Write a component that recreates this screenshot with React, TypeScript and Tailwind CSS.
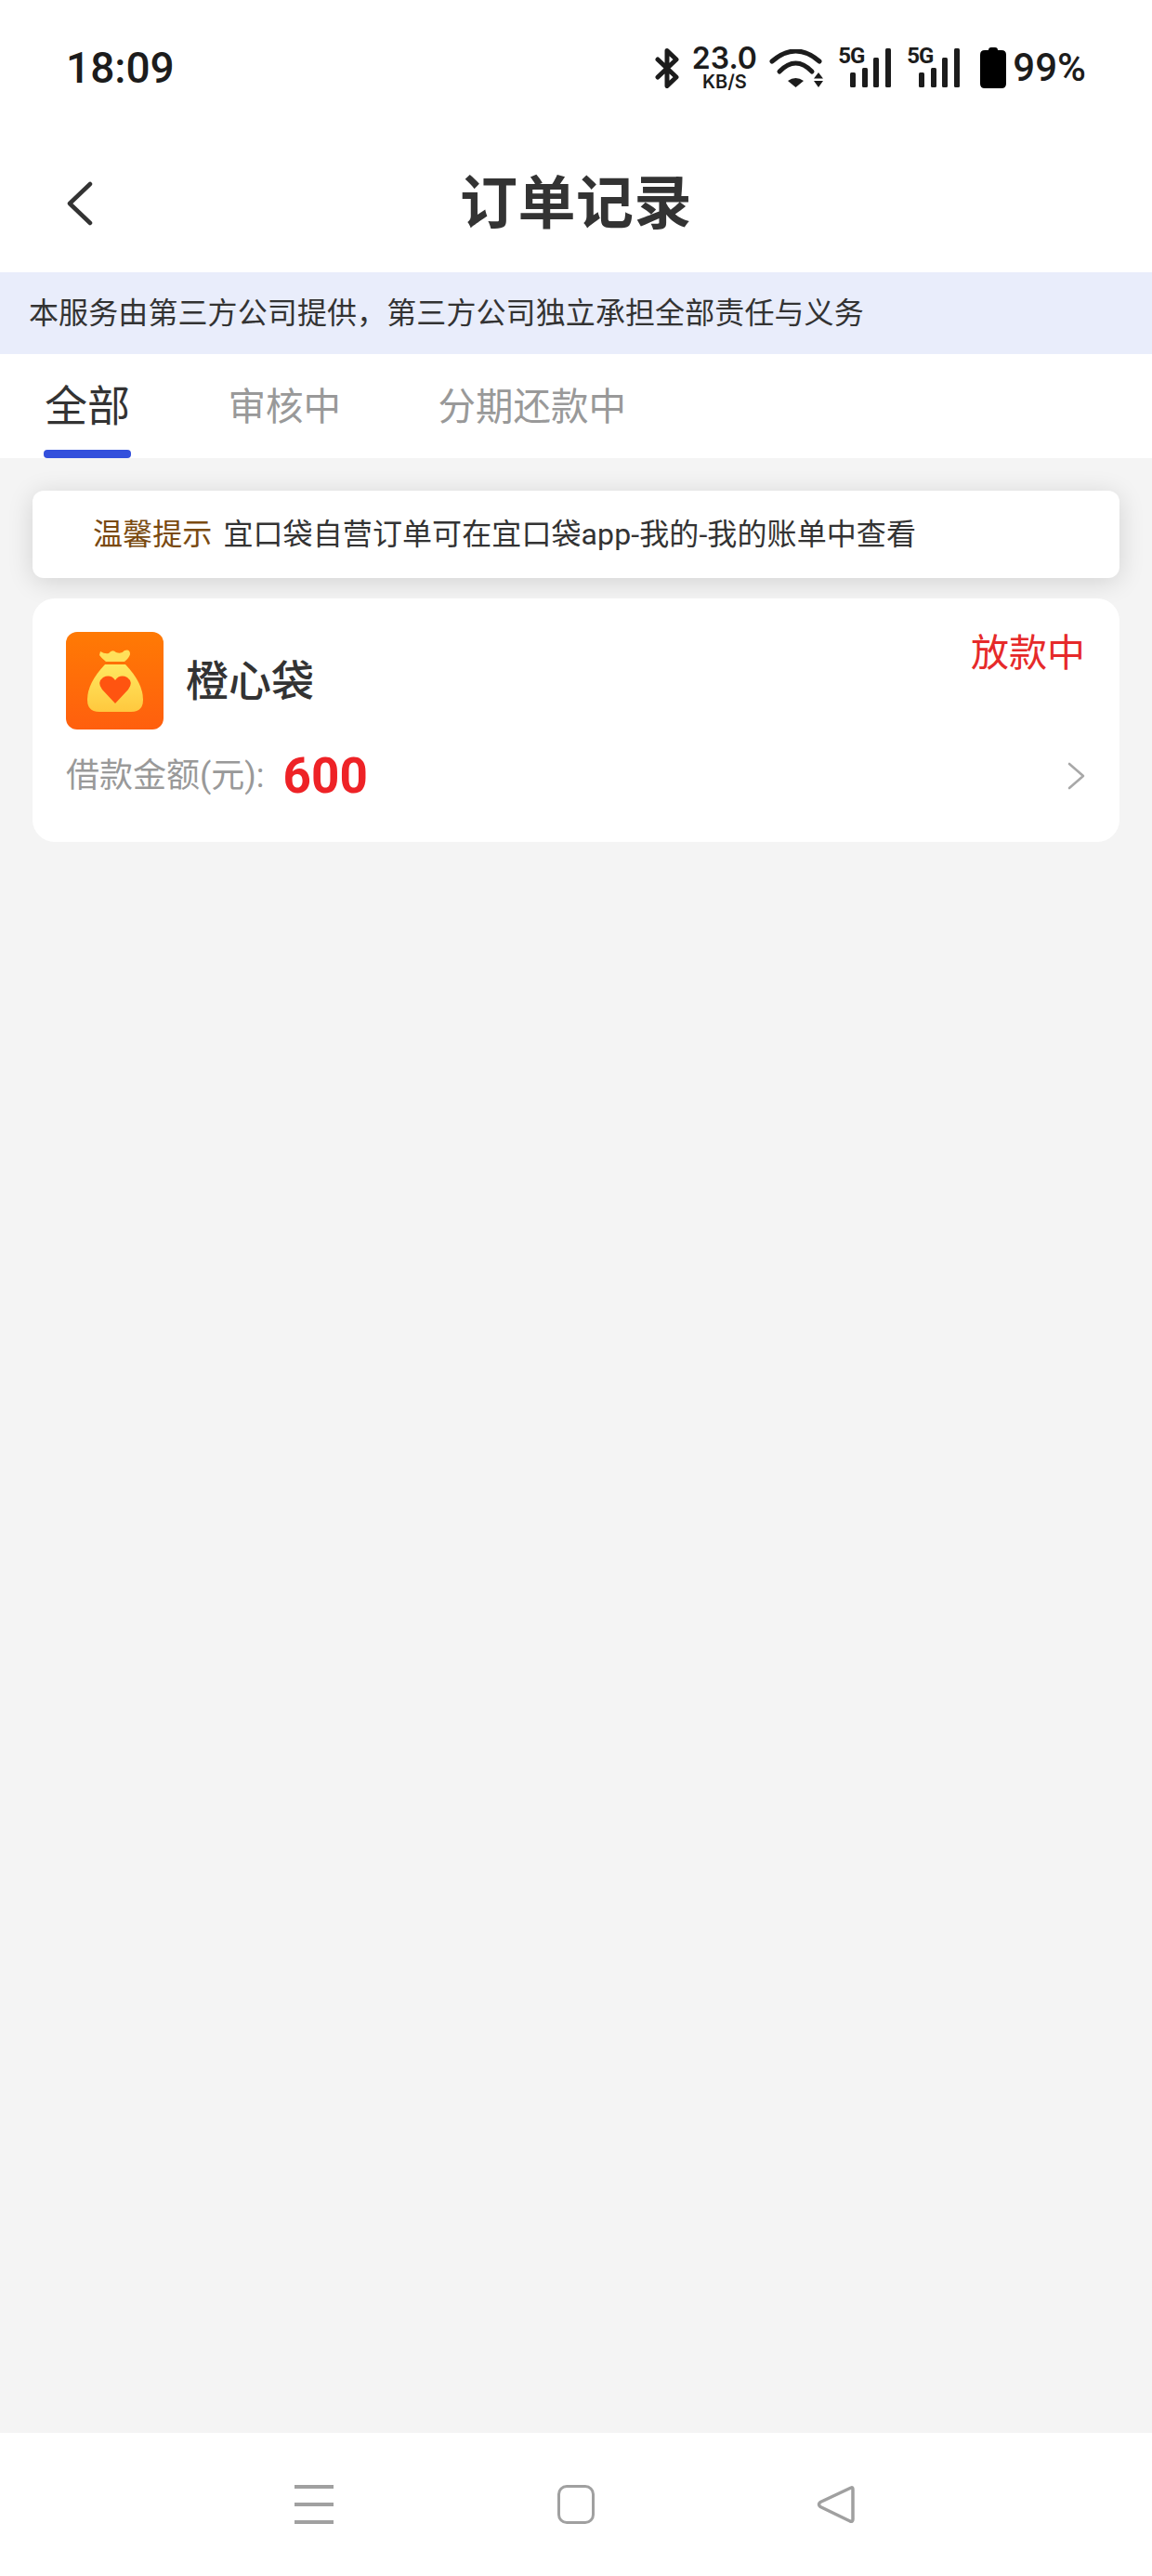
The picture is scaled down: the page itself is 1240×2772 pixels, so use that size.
const tabs = ["审核中", "分期还款中"];

function Signal({ className }: { className?: string }) {
  return (
    <div className={`relative flex h-[42px] w-[57px] items-end gap-[6.5px] pl-[12px] ${className ?? ""}`}>
      <span className="absolute top-[-3px] left-[-1px] text-[24px] leading-[23px] font-bold tracking-[-1px] text-[#1c1c1c]">
        5G
      </span>
      <div className="h-[16px] w-[6px] rounded-[1.5px] bg-[#1c1c1c]" />
      <div className="h-[21px] w-[6px] rounded-[1.5px] bg-[#1c1c1c]" />
      <div className="h-[32px] w-[6px] rounded-[1.5px] bg-[#1c1c1c]" />
      <div className="h-[42px] w-[6px] rounded-[1.5px] bg-[#1c1c1c]" />
    </div>
  );
}

function StatusBar() {
  return (
    <div className="flex h-[146px] items-center justify-between pr-[71px] pl-[71px] text-[#1c1c1c]">
      <span className="text-[46px] leading-none font-medium">18:09</span>
      <div className="flex items-center">
        <svg width="26" height="43" viewBox="0 0 26 43" fill="none" stroke="#1c1c1c" strokeWidth="5" strokeLinejoin="round" strokeLinecap="round">
          <path d="M3 12 L23 31 L13 40.5 V2.5 L23 12 L3 31" />
        </svg>
        <div className="ml-[15px] flex w-[67px] flex-col items-center font-['Inter','Roboto',sans-serif] font-semibold">
          <span className="h-[26px] text-[32px] leading-[26px]">23.0</span>
          <span className="mt-[3px] text-[20px] leading-[18px]">KB/S</span>
        </div>
        <svg className="ml-[15px]" width="58" height="41" viewBox="0 0 58 41" fill="none">
          <path d="M3 13 Q28.5 -9 54 13" stroke="#1c1c1c" strokeWidth="5" strokeLinecap="round" />
          <path d="M11 24 Q28.5 6 46 24" stroke="#1c1c1c" strokeWidth="5" strokeLinecap="round" />
          <path d="M20 34 Q28.5 28 37 34 L28.5 41 Z" fill="#1c1c1c" />
          <path d="M53 25 L58 31.5 H48 Z M48 34 H58 L53 41 Z" fill="#1c1c1c" />
        </svg>
        <Signal className="ml-[17px]" />
        <Signal className="ml-[17px]" />
        <svg className="ml-[21px]" width="28" height="44" viewBox="0 0 28 44">
          <path d="M9 3 Q9 0 12 0 H16 Q19 0 19 3 H23 Q28 3 28 8 V39 Q28 44 23 44 H5 Q0 44 0 39 V8 Q0 3 5 3 Z" fill="#000" />
        </svg>
        <span className="ml-[7px] text-[42px] leading-none font-medium">99%</span>
      </div>
    </div>
  );
}

function NavBar() {
  return (
    <div className="grid h-[147px] grid-cols-[1fr_auto_1fr] items-center">
      <svg className="ml-[70px]" width="30" height="50" viewBox="0 0 30 50" fill="none" stroke="#333" strokeWidth="4.5" strokeLinecap="round" strokeLinejoin="round">
        <path d="M27 3 L5 24 L27 45" />
      </svg>
      <h1 className="text-[62px] leading-none font-bold tracking-[0.5px] text-[#333]">订单记录</h1>
    </div>
  );
}

function Tabs() {
  return (
    <div className="flex h-[112px] items-center gap-[104.5px] bg-white pl-[47px] text-[40.5px] text-[#999]">
      <div className="relative flex h-full w-[94px] items-center justify-center text-[46px] text-[#333]">
        全部
        <div className="absolute bottom-0 left-0 h-[9px] w-[94px] rounded-[4px] bg-[#3350dc]" />
      </div>
      {tabs.map((tab) => (
        <span key={tab} className="pt-[3px]">
          {tab}
        </span>
      ))}
    </div>
  );
}

function BagLogo() {
  return (
    <svg width="105" height="105" viewBox="0 0 105 105" className="shrink-0 rounded-[12px]">
      <defs>
        <linearGradient id="bg" x1="0" y1="0" x2="0" y2="1">
          <stop offset="0" stopColor="#ff7a04" />
          <stop offset="1" stopColor="#ff5f0e" />
        </linearGradient>
        <linearGradient id="bag" x1="0" y1="0" x2="0" y2="1">
          <stop offset="0" stopColor="#ffe860" />
          <stop offset="1" stopColor="#ffc83e" />
        </linearGradient>
      </defs>
      <rect width="105" height="105" fill="url(#bg)" />
      <path d="M37 21 Q42 24 46 23 Q50 18 54 22 Q60 24 63 20 Q69 18 69 24 Q68 28 63 32 H43 Q38 28 36 25 Z" fill="#ffe05a" />
      <path d="M42 35 H64 Q83 55 83 73 Q83 86 70 86 H36 Q23 86 23 73 Q23 55 42 35 Z" fill="url(#bag)" />
      <path d="M53 77 L39 62 Q33 54 40 49 Q48 45 53 52 Q58 45 66 49 Q73 54 67 62 Z" fill="#ff5410" />
    </svg>
  );
}

function OrderCard() {
  return (
    <div className="mt-[22px] flex h-[262px] flex-col rounded-[24px] bg-white px-[36px] pt-[36px]">
      <div className="flex items-center gap-[24px]">
        <BagLogo />
        <span className="text-[46px] leading-none font-medium text-[#333]">橙心袋</span>
        <span className="mt-[3px] ml-auto self-start pr-[1px] text-[41px] leading-[40px] text-[#e62a2a]">放款中</span>
      </div>
      <div className="mt-[30px] flex h-[40px] items-center">
        <span className="text-[36px] leading-none text-[#999]">借款金额(元):</span>
        <span className="ml-[20px] text-[53px] leading-none font-bold text-[#ee2226]">600</span>
        <svg className="ml-auto" width="20" height="30" viewBox="0 0 20 30" fill="none" stroke="#a8a8a8" strokeWidth="2.6" strokeLinecap="round" strokeLinejoin="round">
          <path d="M2 2 L17 15 L2 28" />
        </svg>
      </div>
    </div>
  );
}

function SystemBar() {
  return (
    <div className="flex h-[154px] items-center gap-[241px] bg-white pl-[317px]">
      <div className="flex h-[42px] w-[42px] flex-col justify-between">
        <div className="h-[4px] bg-[#a0a0a0]" />
        <div className="h-[4px] bg-[#a0a0a0]" />
        <div className="h-[4px] bg-[#a0a0a0]" />
      </div>
      <div className="h-[42px] w-[40px] rounded-[10px] border-[3.5px] border-[#a0a0a0]" />
      <svg className="ml-[-2px]" width="41" height="42" viewBox="0 0 41 42" fill="none" stroke="#a0a0a0" strokeWidth="3.5" strokeLinejoin="round">
        <path d="M37 3 Q39 2 39 5 V37 Q39 40 36 39 L4 23.5 Q1 21 4 18.5 Z" />
      </svg>
    </div>
  );
}

export default function App() {
  return (
    <div className="flex h-[2772px] w-[1240px] flex-col bg-white font-['Roboto','Noto_Sans_CJK_SC',sans-serif]">
      <StatusBar />
      <NavBar />
      <div className="flex h-[88px] items-center bg-[#e9edfb] pl-[31px] text-[32px] tracking-[0.1px] text-[#333]">
        本服务由第三方公司提供，第三方公司独立承担全部责任与义务
      </div>
      <Tabs />
      <div className="flex-1 bg-[#f4f4f4] px-[35px] pt-[35px]">
        <div className="flex h-[94px] items-center rounded-[12px] bg-white pl-[65px] text-[32px] tracking-[0.1px] text-[#333] shadow-[0_4px_28px_rgba(0,0,0,0.14)]">
          <span className="mr-[12px] text-[#7a4a10]">温馨提示</span>
          宜口袋自营订单可在宜口袋app-我的-我的账单中查看
        </div>
        <OrderCard />
      </div>
      <SystemBar />
    </div>
  );
}
